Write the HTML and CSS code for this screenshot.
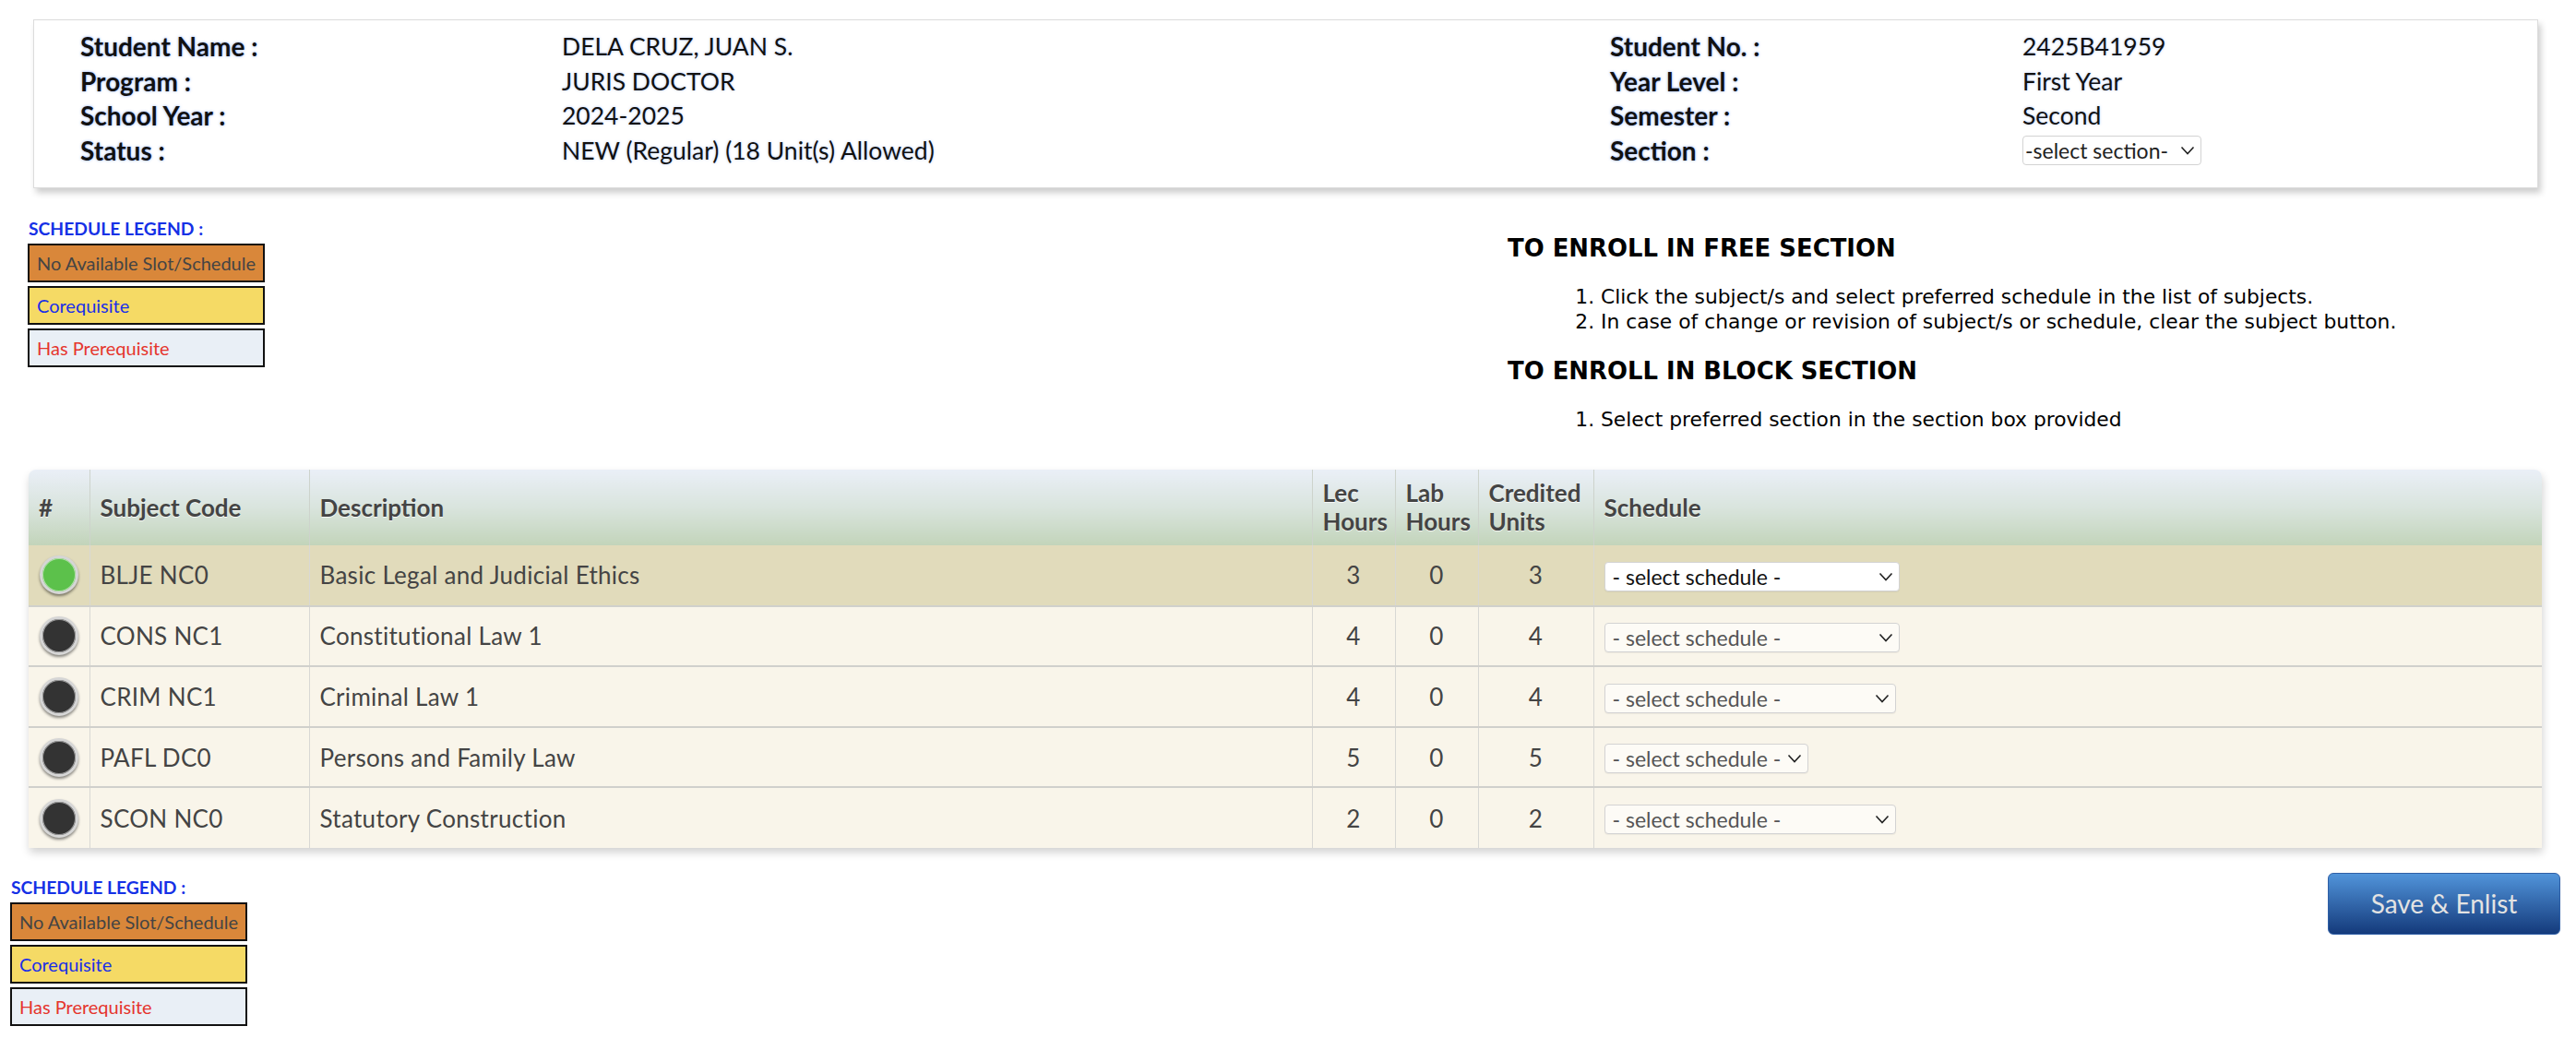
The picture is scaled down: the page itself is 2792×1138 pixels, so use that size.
FILE: index.html
```html
<!DOCTYPE html>
<html lang="en">
<head>
<meta charset="utf-8">
<title>Subject Enlistment</title>
<link rel="stylesheet" href="styles.css">
</head>
<body>
<div class="page">
  <section class="info-card">
    <div class="info-grid">
      <div class="lbl">Student Name :</div><div class="val">DELA CRUZ, JUAN S.</div>
      <div class="lbl">Student No. :</div><div class="val">2425B41959</div>
      <div class="lbl">Program :</div><div class="val">JURIS DOCTOR</div>
      <div class="lbl">Year Level :</div><div class="val">First Year</div>
      <div class="lbl">School Year :</div><div class="val">2024-2025</div>
      <div class="lbl">Semester :</div><div class="val">Second</div>
      <div class="lbl">Status :</div><div class="val">NEW (Regular) (18 Unit(s) Allowed)</div>
      <div class="lbl">Section :</div>
      <div class="val">
        <div class="sel-wrap">
          <select class="sel-section"><option>-select section-</option></select>
          <svg class="chev" viewBox="0 0 16 10"><path d="M1.5 1.5 L8 8.5 L14.5 1.5"/></svg>
        </div>
      </div>
    </div>
  </section>

  <div class="mid">
    <div class="legend">
      <div class="legend-title">SCHEDULE LEGEND :</div>
      <div class="legend-box lg-noslot">No Available Slot/Schedule</div>
      <div class="legend-box lg-coreq">Corequisite</div>
      <div class="legend-box lg-prereq">Has Prerequisite</div>
    </div>
    <div class="instructions">
      <h2 class="instr-h">TO ENROLL IN FREE SECTION</h2>
      <ol class="instr-list">
        <li>Click the subject/s and select preferred schedule in the list of subjects.</li>
        <li>In case of change or revision of subject/s or schedule, clear the subject button.</li>
      </ol>
      <h2 class="instr-h second">TO ENROLL IN BLOCK SECTION</h2>
      <ol class="instr-list">
        <li>Select preferred section in the section box provided</li>
      </ol>
    </div>
  </div>

  <div class="table-wrap">
    <table class="subjects">
      <colgroup>
        <col class="w-num"><col class="w-code"><col class="w-desc"><col class="w-lec"><col class="w-lab"><col class="w-cred"><col>
      </colgroup>
      <thead>
        <tr>
          <th>#</th>
          <th>Subject Code</th>
          <th>Description</th>
          <th>Lec<br>Hours</th>
          <th>Lab<br>Hours</th>
          <th>Credited<br>Units</th>
          <th>Schedule</th>
        </tr>
      </thead>
      <tbody>
        <tr class="selected">
          <td class="c-dot"><span class="dot dot-on"></span></td>
          <td>BLJE NC0</td>
          <td>Basic Legal and Judicial Ethics</td>
          <td class="num">3</td><td class="num">0</td><td class="num">3</td>
          <td><div class="sel-wrap"><select class="sel-sched sel-active sel-w320"><option>- select schedule -</option></select><svg class="chev" viewBox="0 0 16 10"><path d="M1.5 1.5 L8 8.5 L14.5 1.5"/></svg></div></td>
        </tr>
        <tr>
          <td class="c-dot"><span class="dot dot-off"></span></td>
          <td>CONS NC1</td>
          <td>Constitutional Law 1</td>
          <td class="num">4</td><td class="num">0</td><td class="num">4</td>
          <td><div class="sel-wrap"><select class="sel-sched sel-w320"><option>- select schedule -</option></select><svg class="chev" viewBox="0 0 16 10"><path d="M1.5 1.5 L8 8.5 L14.5 1.5"/></svg></div></td>
        </tr>
        <tr>
          <td class="c-dot"><span class="dot dot-off"></span></td>
          <td>CRIM NC1</td>
          <td>Criminal Law 1</td>
          <td class="num">4</td><td class="num">0</td><td class="num">4</td>
          <td><div class="sel-wrap"><select class="sel-sched sel-w316"><option>- select schedule -</option></select><svg class="chev" viewBox="0 0 16 10"><path d="M1.5 1.5 L8 8.5 L14.5 1.5"/></svg></div></td>
        </tr>
        <tr>
          <td class="c-dot"><span class="dot dot-off"></span></td>
          <td>PAFL DC0</td>
          <td>Persons and Family Law</td>
          <td class="num">5</td><td class="num">0</td><td class="num">5</td>
          <td><div class="sel-wrap"><select class="sel-sched sel-w221"><option>- select schedule -</option></select><svg class="chev" viewBox="0 0 16 10"><path d="M1.5 1.5 L8 8.5 L14.5 1.5"/></svg></div></td>
        </tr>
        <tr>
          <td class="c-dot"><span class="dot dot-off"></span></td>
          <td>SCON NC0</td>
          <td>Statutory Construction</td>
          <td class="num">2</td><td class="num">0</td><td class="num">2</td>
          <td><div class="sel-wrap"><select class="sel-sched sel-w316"><option>- select schedule -</option></select><svg class="chev" viewBox="0 0 16 10"><path d="M1.5 1.5 L8 8.5 L14.5 1.5"/></svg></div></td>
        </tr>
      </tbody>
    </table>
  </div>

  <div class="bottom">
    <div class="legend">
      <div class="legend-title">SCHEDULE LEGEND :</div>
      <div class="legend-box lg-noslot">No Available Slot/Schedule</div>
      <div class="legend-box lg-coreq">Corequisite</div>
      <div class="legend-box lg-prereq">Has Prerequisite</div>
    </div>
    <button class="save" type="button">Save &amp; Enlist</button>
  </div>
</div>
</body>
</html>
```

FILE: styles.css
```css
* { box-sizing: border-box; }

html, body {
  margin: 0;
  padding: 0;
  background: #fff;
}

body {
  font-family: Lato, "Open Sans", sans-serif;
  color: #111;
}

.page {
  width: 2792px;
}

/* ---------- student info card ---------- */
.info-card {
  margin: 21px 41px 0 36px;
  height: 183px;
  border: 1px solid #dcdcdc;
  background: #fff;
  box-shadow: 3px 5px 7px rgba(0, 0, 0, 0.2);
  padding: 10px 0 0 50px;
}

.info-grid {
  display: grid;
  grid-template-columns: 522px 1136px 447px 1fr;
  grid-auto-rows: 37.5px;
}

.lbl {
  font: 700 28px/37.5px Lato, sans-serif;
  color: #111;
  text-shadow: 0 0 3px rgba(90, 140, 255, 0.75);
}

.val {
  font: 400 26.5px/37.5px Lato, sans-serif;
  color: #111;
  text-shadow: 0 0 3px rgba(90, 140, 255, 0.45);
  display: flex;
  align-items: center;
}

/* ---------- selects ---------- */
.sel-wrap {
  position: relative;
  display: inline-block;
  vertical-align: middle;
}

.sel-wrap select {
  -webkit-appearance: none;
  appearance: none;
  display: block;
  height: 32px;
  margin: 0;
  border: 1px solid #d3d3d3;
  border-radius: 4px;
  outline: none;
}

.sel-wrap .chev {
  position: absolute;
  right: 7px;
  top: 11px;
  width: 16px;
  height: 10px;
  pointer-events: none;
}

.sel-wrap .chev path {
  fill: none;
  stroke: #222;
  stroke-width: 1.6;
}

.sel-section {
  width: 194px;
  padding: 0 0 0 2px;
  background: #fff;
  color: #222;
  font: 400 23px Lato, sans-serif;
  text-shadow: none;
}

.sel-sched {
  padding: 0 0 0 8px;
  background: #fdfbf6;
  color: #555;
  font: 400 23px Lato, sans-serif;
  box-shadow: 0 1px 1px rgba(0, 0, 0, 0.05);
}

.sel-sched.sel-active {
  background: #fff;
  color: #111;
}

.sel-w320 { width: 320px; }
.sel-w316 { width: 316px; }
.sel-w221 { width: 221px; }

/* ---------- legend + instructions ---------- */
.mid {
  display: grid;
  grid-template-columns: 1604px 1fr;
  padding: 32px 0 0 30px;
  align-items: start;
}

.legend-title {
  font: 700 19.3px/24px Lato, sans-serif;
  color: #1531e6;
  padding-left: 1px;
  margin-bottom: 4px;
}

.legend-box {
  width: 257px;
  height: 42px;
  border: 2px solid #111;
  margin-bottom: 4px;
  padding-left: 8px;
  font: 400 20px/38px Lato, sans-serif;
  white-space: nowrap;
}

.lg-noslot { background: #d9873a; color: #444; }
.lg-coreq { background: #f5da65; color: #1a2fe8; }
.lg-prereq { background: #e9eff6; color: #e5352d; }

.instructions {
  margin-top: 18px;
  color: #000;
}

.instr-h {
  margin: 0;
  font: 700 25.9px/30px "DejaVu Sans", sans-serif;
  color: #000;
}

.instr-h.second {
  margin-top: 25px;
}

.instr-list {
  margin: 24px 0 0;
  padding-left: 101px;
  font: 400 21.8px/27px "DejaVu Sans", sans-serif;
  color: #000;
}

/* ---------- subjects table ---------- */
.table-wrap {
  margin: 41px 37px 0 31px;
  border-radius: 8px 8px 0 0;
  overflow: hidden;
  box-shadow: 1px 5px 10px rgba(0, 0, 0, 0.18);
}

.subjects {
  width: 100%;
  border-collapse: collapse;
  table-layout: fixed;
}

.w-num { width: 66px; }
.w-code { width: 238px; }
.w-desc { width: 1087px; }
.w-lec { width: 90px; }
.w-lab { width: 90px; }
.w-cred { width: 125px; }

.subjects th {
  height: 82px;
  padding: 0 11px;
  background: linear-gradient(#eaeff7 0%, #d9e4dd 50%, #c2d4ba 100%);
  font: 700 26px/31px Lato, sans-serif;
  color: #444;
  text-shadow: 0 1px 0 rgba(255, 255, 255, 0.8);
  text-align: left;
  vertical-align: middle;
  border-left: 1px solid #cdd3cc;
}

.subjects th:first-child { border-left: none; }

.subjects td {
  height: 65.6px;
  padding: 0 11px;
  background: #f9f5ea;
  font: 400 26px Lato, sans-serif;
  letter-spacing: 0.3px;
  color: #444;
  vertical-align: middle;
  border-top: 2px solid #d0d0cc;
  border-left: 1px solid #d8d8d4;
  white-space: nowrap;
}

.subjects td:first-child { border-left: none; }
.subjects tbody tr:first-child td { border-top: none; }

.subjects tr.selected td { background: #e1dbbb; }

.subjects td.num {
  text-align: center;
  padding: 0;
}

.subjects td.c-dot {
  padding: 0;
}

.dot {
  display: block;
  width: 42px;
  height: 42px;
  margin: 0 auto;
  border-radius: 50%;
  border: 3px solid #d6d6d6;
  box-shadow: 0 2px 3px rgba(0, 0, 0, 0.45), inset 0 0 0 1px rgba(255, 255, 255, 0.5);
}

.dot-on { background: #5cc14b; }
.dot-off { background: #333; }

/* ---------- bottom ---------- */
.bottom {
  display: flex;
  justify-content: space-between;
  align-items: flex-start;
  margin: 27px 17px 0 11px;
}

.bottom .legend {
  margin-top: 4px;
}

.save {
  width: 252px;
  height: 67px;
  border: 1px solid #2f5fa6;
  border-radius: 6px;
  background: linear-gradient(#5194da, #143a7b);
  color: #e3e3e3;
  font: 400 28px Lato, sans-serif;
  cursor: pointer;
}
```
